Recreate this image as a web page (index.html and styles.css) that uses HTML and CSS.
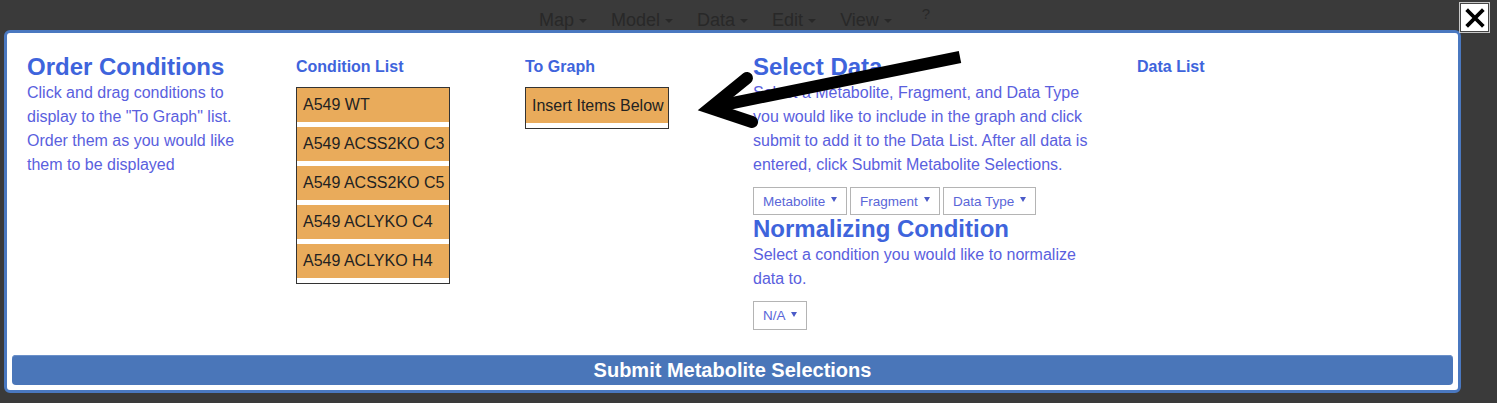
FILE: index.html
```html
<!DOCTYPE html>
<html lang="en">
<head>
<meta charset="utf-8">
<title>Order Conditions</title>
<link rel="stylesheet" href="styles.css">
</head>
<body>
<header class="topbar">
  <nav class="menu">
    <span class="menu-item">Map <i class="caret"></i></span>
    <span class="menu-item">Model <i class="caret"></i></span>
    <span class="menu-item">Data <i class="caret"></i></span>
    <span class="menu-item">Edit <i class="caret"></i></span>
    <span class="menu-item">View <i class="caret"></i></span>
    <span class="menu-help">?</span>
  </nav>
</header>

<button class="close" aria-label="Close">
  <svg width="20" height="20" viewBox="0 0 20 20"><path d="M3 3 L17 17 M17 3 L3 17" stroke="#000" stroke-width="3.8" stroke-linecap="square"/></svg>
</button>

<div class="modal">
  <div class="modal-body">
    <section class="col col-order">
      <h2>Order Conditions</h2>
      <p>Click and drag conditions to display to the "To Graph" list. Order them as you would like them to be displayed</p>
    </section>
    <section class="col">
      <h3>Condition List</h3>
      <ul class="cond-list">
        <li>A549 WT</li>
        <li>A549 ACSS2KO C3</li>
        <li>A549 ACSS2KO C5</li>
        <li>A549 ACLYKO C4</li>
        <li>A549 ACLYKO H4</li>
      </ul>
    </section>
    <section class="col">
      <h3>To Graph</h3>
      <ul class="cond-list graph-list">
        <li>Insert Items Below</li>
      </ul>
    </section>
    <section class="col col-select">
      <h2>Select Data</h2>
      <p>Select a Metabolite, Fragment, and Data Type you would like to include in the graph and click submit to add it to the Data List. After all data is entered, click Submit Metabolite Selections.</p>
      <div class="selects">
        <div class="select sel-metabolite">Metabolite <i class="dd"></i></div>
        <div class="select sel-fragment">Fragment <i class="dd"></i></div>
        <div class="select sel-type">Data Type <i class="dd"></i></div>
      </div>
      <h2>Normalizing Condition</h2>
      <p>Select a condition you would like to normalize data to.</p>
      <div class="selects">
        <div class="select sel-na">N/A <i class="dd"></i></div>
      </div>
    </section>
    <section class="col">
      <h3>Data List</h3>
    </section>
  </div>
  <button class="submit">Submit Metabolite Selections</button>
</div>

<svg class="arrow" width="1497" height="403" viewBox="0 0 1497 403">
  <path d="M960 57 L718 106" stroke="#000" stroke-width="12" stroke-linecap="butt" fill="none"/>
  <path d="M747 78 L710 108 L752 122" stroke="#000" stroke-width="12" stroke-linecap="round" stroke-linejoin="miter" stroke-miterlimit="10" fill="none"/>
</svg>
</body>
</html>
```

FILE: styles.css
```css
html, body {
  margin: 0;
  padding: 0;
}
body {
  width: 1497px;
  height: 403px;
  overflow: hidden;
  background: #3a3a3a;
  font-family: "Liberation Sans", Arial, sans-serif;
  position: relative;
}

.topbar {
  height: 30px;
  overflow: hidden;
}
.menu {
  display: flex;
  gap: 24px;
  padding: 10px 0 0 539px;
  font-size: 18px;
  line-height: 20px;
  color: #282828;
}
.menu-item {
  white-space: nowrap;
}
.caret {
  display: inline-block;
  width: 0;
  height: 0;
  border-top: 4px solid #282828;
  border-left: 4px solid transparent;
  border-right: 4px solid transparent;
  vertical-align: middle;
}
.menu-help {
  font-size: 15px;
  margin-left: 6px;
  margin-top: -6px;
}

.close {
  position: absolute;
  left: 1459px;
  top: 2px;
  width: 31px;
  height: 31px;
  padding: 0;
  margin: 0;
  background: #fff;
  border: 1px solid #c8c8c8;
  box-shadow: inset 0 0 0 1px #444;
  display: flex;
  align-items: center;
  justify-content: center;
}

.modal {
  margin-left: 4px;
  width: 1457px;
  height: 363px;
  box-sizing: border-box;
  border: 3px solid #4a78c0;
  border-radius: 6px;
  background: #fff;
  display: flex;
  flex-direction: column;
}
.modal-body {
  flex: 1;
  display: grid;
  grid-template-columns: 269px 229px 228px 384px 1fr;
  padding: 20px 0 0 20px;
  align-items: start;
}

h2 {
  margin: 0;
  font-size: 24px;
  line-height: 28px;
  font-weight: bold;
  color: #3e64dc;
}
h3 {
  margin: 0;
  font-size: 16px;
  line-height: 28px;
  font-weight: bold;
  color: #3e64dc;
}
p {
  margin: 0;
  font-size: 16px;
  line-height: 24px;
  color: #5a60de;
}
.col-order p {
  width: 232px;
}
.col-select p {
  width: 345px;
}

.cond-list {
  list-style: none;
  margin: 6px 0 0;
  padding: 0;
  width: 154px;
  box-sizing: border-box;
  border: 1px solid #333;
  background: #fff;
}
.cond-list li {
  height: 34px;
  line-height: 34px;
  padding-left: 6px;
  margin-bottom: 5px;
  background: #e9ab5b;
  color: #222;
  font-size: 16px;
  white-space: nowrap;
}
.graph-list {
  width: 144px;
}
.graph-list li {
  height: 35px;
  line-height: 35px;
}

.selects {
  display: flex;
  gap: 3px;
  margin: 10px 0 0;
}
.select {
  height: 28px;
  box-sizing: border-box;
  border: 1px solid #b4b4b4;
  background: #fff;
  color: #5a66d8;
  font-size: 13.5px;
  display: flex;
  align-items: center;
  justify-content: space-between;
  padding: 0 9px 0 9px;
  white-space: nowrap;
}
.sel-metabolite { width: 94px; }
.sel-fragment { width: 90px; }
.sel-type { width: 93px; }
.sel-na { width: 54px; height: 29px; }
.dd {
  display: inline-block;
  width: 0;
  height: 0;
  border-top: 5px solid #4b5bc8;
  border-left: 3px solid transparent;
  border-right: 3px solid transparent;
  margin-top: -3px;
}

.submit {
  margin: 0 5px 5px 5px;
  height: 30px;
  border: 0;
  border-radius: 4px;
  background: #4a76b9;
  box-shadow: inset 0 1px 0 #6b90c9;
  color: #fff;
  font-family: "Liberation Sans", Arial, sans-serif;
  font-size: 20px;
  font-weight: bold;
  line-height: 30px;
  text-align: center;
  padding: 0;
}

.arrow {
  position: absolute;
  left: 0;
  top: 0;
  pointer-events: none;
}
```
